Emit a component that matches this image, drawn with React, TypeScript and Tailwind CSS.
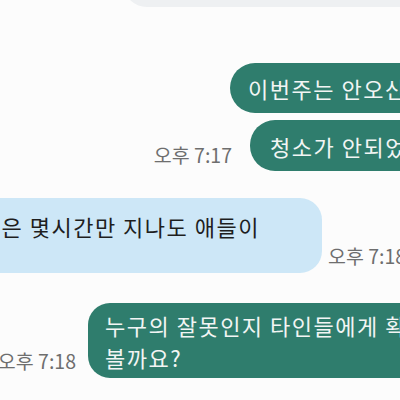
export default function App() {
  const time = "text-[19.5px] leading-[22px] text-[#6e6e6e] whitespace-nowrap";
  const green = "shrink-0 whitespace-nowrap bg-[#2f7d6d] text-[#f2f5f4] text-[22px] tracking-[1.5px]";

  return (
    <div className="w-[400px] h-[400px] overflow-hidden bg-[#fcfcfc] font-['Noto_Sans_CJK_KR','Noto_Sans',sans-serif]">
      {/* end of previous gray bubble */}
      <div className="-mt-[53px] h-[60px] ml-[123px] -mr-[40px] rounded-[24px] bg-[#eef0f2]" />

      <div className="mt-[56px] flex pl-[230px]">
        <div className={`${green} rounded-[25px] pl-[18px] pr-[40px] py-[9px] leading-[32px]`}>
          이번주는 안오신
        </div>
      </div>

      <div className="mt-[7px] flex items-end">
        <div className="w-[250px] shrink-0 flex justify-end pr-[18px] pb-[5px]">
          <span className={time}>오후 7:17</span>
        </div>
        <div className={`${green} rounded-[25px] pl-[20px] pr-[40px] py-[9.5px] leading-[32px]`}>
          청소가 안되었
        </div>
      </div>

      <div className="mt-[27px] flex items-end">
        <div className="w-[322px] h-[75px] shrink-0 flex justify-end rounded-r-[22px] bg-[#cde7f7] pt-[13px] pr-[62px] text-[22px] tracking-[1.5px] leading-[30px] text-[#1e1e1e] whitespace-nowrap">
          은 몇시간만 지나도 애들이
        </div>
        <span className={`${time} ml-[6px] pb-[6px]`}>오후 7:18</span>
      </div>

      <div className="mt-[30px] flex items-end">
        <div className="w-[88px] shrink-0 flex justify-end pr-[12px] pb-[6px]">
          <span className={time}>오후 7:18</span>
        </div>
        <div className={`${green} rounded-[22px] pl-[17px] pr-[40px] py-[5.5px] leading-[32px]`}>
          <div>누구의 잘못인지 타인들에게 확인해</div>
          <div>볼까요?</div>
        </div>
      </div>
    </div>
  );
}
